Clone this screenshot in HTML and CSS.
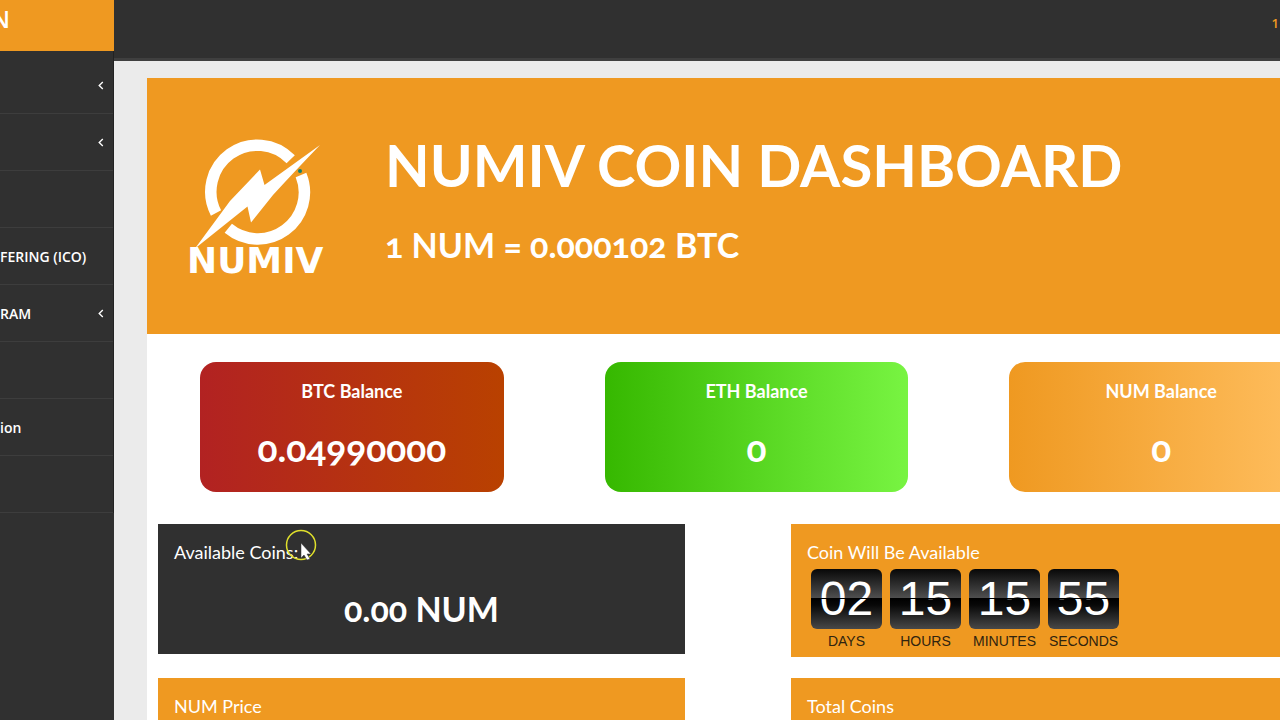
FILE: index.html
```html
<!DOCTYPE html>
<html lang="en">
<head>
    <meta charset="UTF-8">
    <meta name="viewport" content="width=device-width, initial-scale=1.0">
    <title>Numiv Coin Dashboard</title>
    <link rel="stylesheet" href="styles.css">
</head>
<body>
    <div class="wrapper">
        <aside class="sidebar">
            <div class="brand">N</div>
            <nav class="menu">
                <a href="#" aria-label="Menu 1"><svg class="arrow" viewBox="0 0 6 10"><path d="M5 1L1 5l4 4"/></svg></a>
                <a href="#" aria-label="Menu 2"><svg class="arrow" viewBox="0 0 6 10"><path d="M5 1L1 5l4 4"/></svg></a>
                <a href="#" aria-label="Menu 3"></a>
                <a href="#">FERING (ICO)</a>
                <a href="#">RAM<svg class="arrow" viewBox="0 0 6 10"><path d="M5 1L1 5l4 4"/></svg></a>
                <a href="#" aria-label="Menu 6"></a>
                <a href="#">ion</a>
                <a href="#" aria-label="Menu 8"></a>
            </nav>
        </aside>

        <div class="main">
            <header class="topbar">1</header>

            <main class="panel">
                <section class="hero">
                    <svg class="logo" viewBox="0 0 160 144" role="img" aria-label="Numiv">
                        <g fill="none" stroke="#fff" stroke-width="11.5">
                            <path d="M29 78A46.500 46.500 0 0 1 103.700 24.300"/>
                            <path d="M114 40A46.500 46.500 0 0 1 41.300 93.300"/>
                        </g>
                        <path fill="#fff" d="M133 10Q108 36 86 60L64 87.500 60.500 71.500 8 113.500 43 66 73 34.500 77.500 50z"/>
                        <circle cx="113" cy="36" r="2" fill="#12806f"/>
                        <text x="0" y="138">NUMIV</text>
                    </svg>
                    <div>
                        <h1>NUMIV COIN DASHBOARD</h1>
                        <h2>1 NUM = 0.000102 BTC</h2>
                    </div>
                </section>

                <section class="balances">
                    <div class="balance btc">
                        <h3>BTC Balance</h3>
                        <p>0.04990000</p>
                    </div>
                    <div class="balance eth">
                        <h3>ETH Balance</h3>
                        <p>0</p>
                    </div>
                    <div class="balance num">
                        <h3>NUM Balance</h3>
                        <p>0</p>
                    </div>
                </section>

                <section class="boxes">
                    <div class="box dark">
                        <h4>Available Coins:</h4>
                        <p class="amount">0.00 NUM</p>
                    </div>
                    <div class="box">
                        <h4>Coin Will Be Available</h4>
                        <div class="countdown">
                            <div class="unit"><span class="digits">02</span><span>DAYS</span></div>
                            <div class="unit"><span class="digits">15</span><span>HOURS</span></div>
                            <div class="unit"><span class="digits">15</span><span>MINUTES</span></div>
                            <div class="unit"><span class="digits">55</span><span>SECONDS</span></div>
                        </div>
                    </div>
                    <div class="box">
                        <h4>NUM Price</h4>
                    </div>
                    <div class="box">
                        <h4>Total Coins</h4>
                    </div>
                </section>
            </main>
        </div>
    </div>

    <svg class="pointer" viewBox="0 0 32 32" aria-hidden="true">
        <circle cx="16" cy="16" r="14.500" fill="none" stroke="#e0e02c" stroke-width="1.500"/>
        <path d="M16 14v15l3-3 3 5 3-1-3-5h4z" fill="#fff" stroke="#333" stroke-width=".5"/>
    </svg>
</body>
</html>
```
FILE: styles.css
```css
* {
    box-sizing: border-box;
}

body {
    margin: 0;
    font-family: Lato, sans-serif;
    font-variant-numeric: oldstyle-nums;
    background: #ebebeb;
    color: #fff;
    overflow: hidden;
}

h1, h2, h3, h4, p {
    margin: 0;
}

.wrapper {
    display: grid;
    grid-template-columns: 114px 1fr;
    min-height: 100vh;
}

/* sidebar */
.sidebar {
    background: #303030;
    overflow: hidden;
}

.brand {
    display: flex;
    justify-content: flex-end;
    height: 51px;
    padding-right: 104px;
    background: #ef9921;
    font: 600 24px/38px "Open Sans", sans-serif;
}

.menu {
    padding-top: 6px;
    border-right: 1px solid #222;
}

.menu a {
    display: flex;
    align-items: center;
    height: 57px;
    padding-right: 9px;
    border-bottom: 1px solid #3d3d3d;
    color: #fff;
    font: 600 14px "Open Sans", sans-serif;
    text-decoration: none;
}

.arrow {
    width: 6px;
    height: 9px;
    margin-left: auto;
    fill: none;
    stroke: #fff;
    stroke-width: 1.5;
}

/* content */
.main {
    min-width: 0;
    height: 100vh;
    overflow: hidden;
}

.topbar {
    height: 61px;
    padding: 14px 1px;
    background: #303030;
    border-bottom: 3px solid #3f3f3f;
    color: #ef9921;
    font: 600 13px/18px "Open Sans", sans-serif;
    text-align: right;
}

.panel {
    min-height: 660px;
    margin: 17px -86px 0 33px;
    background: #fff;
}

.hero {
    display: flex;
    align-items: flex-start;
    gap: 38px;
    height: 256px;
    padding: 57px 40px;
    background: #ef9921;
}

.logo {
    flex: none;
    width: 160px;
    height: 144px;
}

.logo text {
    fill: #fff;
    font: bold 36px "DejaVu Sans", sans-serif;
}

.hero h1 {
    font-size: 58px;
    line-height: 60px;
    white-space: nowrap;
}

.hero h2 {
    margin-top: 30px;
    font-size: 34px;
    line-height: 40px;
}

.balances {
    display: grid;
    grid-template-columns: repeat(3, 1fr);
    gap: 101px;
    padding: 28px 53px 32px;
}

.balance {
    height: 130px;
    padding-top: 18px;
    border-radius: 16px;
    text-align: center;
}

.balance h3 {
    font-size: 18px;
    line-height: 22px;
}

.balance p {
    margin-top: 26px;
    font-size: 37px;
    font-weight: bold;
    line-height: 40px;
}

.btc {
    background: linear-gradient(to right, #b22222, #b94100);
}

.eth {
    background: linear-gradient(to right, #36b800, #78f442);
}

.num {
    background: linear-gradient(to right, #ef9921, #ffbf60);
}

.boxes {
    display: grid;
    grid-template-columns: 1fr 1fr;
    align-items: start;
    gap: 21px 106px;
    padding: 0 48px 0 11px;
}

.box {
    min-height: 130px;
    padding: 17px 16px 4px;
    background: #ef9921;
}

.dark {
    background: #303030;
}

.box h4 {
    font-size: 18px;
    font-weight: normal;
    line-height: 22px;
}

.amount {
    margin-top: 26px;
    font-size: 34px;
    font-weight: bold;
    line-height: 40px;
    text-align: center;
}

/* countdown */
.countdown {
    display: flex;
    gap: 8px;
    padding: 6px 4px 0;
    font-family: "Liberation Sans", Arial, sans-serif;
    font-variant-numeric: normal;
}

.unit {
    width: 71px;
    color: #30240f;
    font-size: 14px;
    line-height: 24px;
    text-align: center;
}

.unit span {
    display: block;
}

.unit .digits {
    position: relative;
    height: 60px;
    border-radius: 6px;
    background: linear-gradient(#080808, #505050 49%, #000 49%, #080808 60%, #484848);
    color: #fff;
    font-size: 48px;
    line-height: 60px;
}

.digits::after {
    content: "";
    position: absolute;
    left: 0;
    right: 0;
    top: 29px;
    height: 1px;
    background: #000;
}

.pointer {
    position: absolute;
    left: 285px;
    top: 529px;
    width: 32px;
    height: 32px;
}
```
